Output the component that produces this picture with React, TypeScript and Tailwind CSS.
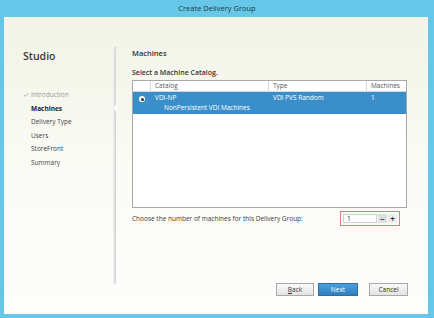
import { Check } from 'lucide-react'

const NAV = ['Machines', 'Delivery Type', 'Users', 'StoreFront', 'Summary']

export default function App() {
  return (
    <div
      className="w-[434px] h-[318px] bg-[#66c7e8] flex flex-col overflow-hidden text-[#333]"
      style={{ fontFamily: '"Open Sans", "Noto Sans", sans-serif' }}
    >
      {/* title bar */}
      <div className="h-[17px] flex items-center justify-center text-[7.5px] text-[#1d3a4a] pt-[1px]">
        Create Delivery Group
      </div>

      {/* window body */}
      <div className="flex-1 ml-[4px] mr-[6px] mb-[4px] flex bg-gradient-to-b from-[#f1f4e6] via-[#fafbf5] to-[#fdfdfc]">
        {/* left nav */}
        <div className="w-[109px] flex flex-col pl-[19px]">
          <div className="mt-[31px] text-[10.5px] font-semibold text-[#3a3a3a] leading-[16px]">Studio</div>
          <div className="mt-[24px] flex flex-col text-[6.5px] leading-[13.5px]">
            <div className="flex items-center text-[#9a9a9a]">
              <Check className="w-[6px] h-[6px] mr-[2px]" strokeWidth={3} />
              Introduction
            </div>
            {NAV.map((n, i) => (
              <div key={n} className={`pl-[8px] ${i === 0 ? 'font-bold text-[#222]' : 'text-[#444]'}`}>
                {n}
              </div>
            ))}
          </div>
        </div>

        {/* divider shadow */}
        <div className="relative w-[3px] my-[30px] bg-gradient-to-r from-[#f2f2f2] to-[#d0d0d0]">
          <div className="absolute left-[0px] top-[57px] w-0 h-0 border-y-[4px] border-y-transparent border-r-[4px] border-r-white" />
        </div>

        {/* right content */}
        <div className="flex-1 flex flex-col pl-[16px] pr-[14px] pb-[18px]">
          <div className="mt-[31px] text-[7.5px] font-semibold leading-[10px] text-[#333]">Machines</div>
          <div className="mt-[10px] text-[7px] font-semibold leading-[10px] text-[#333]">Select a Machine Catalog.</div>

          {/* catalog table */}
          <div className="mt-[2px] w-[275px] h-[128px] border border-[#a8a8a8] bg-white text-[6.5px]">
            <div className="flex h-[11px] items-center border-b border-[#d8d8d8] text-[#555]">
              <div className="w-[18px] h-full border-r border-[#d8d8d8]" />
              <div className="w-[118px] h-full border-r border-[#d8d8d8] pl-[4px] flex items-center">Catalog</div>
              <div className="w-[98px] h-full border-r border-[#d8d8d8] pl-[4px] flex items-center">Type</div>
              <div className="flex-1 pl-[4px]">Machines</div>
            </div>
            <div className="flex h-[22px] bg-[#3a8fca] text-white">
              <div className="w-[18px] flex justify-center pt-[4px]">
                <div className="w-[6px] h-[6px] rounded-full bg-white flex items-center justify-center">
                  <div className="w-[3px] h-[3px] rounded-full bg-[#333]" />
                </div>
              </div>
              <div className="w-[118px] pl-[4px] pt-[1px] leading-[10px]">
                <div>VDI-NP</div>
                <div className="pl-[9px]">NonPersistent VDI Machines</div>
              </div>
              <div className="w-[98px] pl-[4px] pt-[1px] leading-[10px]">VDI PVS Random</div>
              <div className="flex-1 pl-[4px] pt-[1px] leading-[10px]">1</div>
            </div>
          </div>

          {/* machine count */}
          <div className="mt-[3px] flex items-center text-[6.5px]">
            <span className="text-[#3c3c3c]">Choose the number of machines for this Delivery Group:</span>
            <div className="ml-auto mr-[14px] h-[15px] w-[60px] border border-[#e07a80] flex items-center p-[2px] gap-[1px]">
              <div className="flex-1 h-full bg-white border border-[#d0d0d0] pl-[3px] flex items-center text-[#333]">1</div>
              <div className="w-[9px] h-full bg-[#dedede] flex items-center justify-center text-[8px] font-bold text-[#333] leading-none">−</div>
              <div className="w-[9px] h-full bg-[#ececec] flex items-center justify-center text-[8px] font-bold text-[#333] leading-none">+</div>
            </div>
          </div>

          {/* buttons */}
          <div className="mt-auto flex justify-end items-center text-[6.5px] pr-[6px]">
            <button className="w-[38px] h-[13px] border border-[#a9a9a9] bg-gradient-to-b from-[#fafafa] to-[#e3e3e3] text-[#333]">
              <span className="underline">B</span>ack
            </button>
            <button className="ml-[4px] w-[40px] h-[13px] border border-[#2a6fa8] bg-gradient-to-b from-[#4aa0da] to-[#2f7fbf] text-white">
              Next
            </button>
            <button className="ml-[11px] w-[39px] h-[13px] border border-[#a9a9a9] bg-gradient-to-b from-[#fafafa] to-[#e3e3e3] text-[#333]">
              Cancel
            </button>
          </div>
        </div>
      </div>
    </div>
  )
}
